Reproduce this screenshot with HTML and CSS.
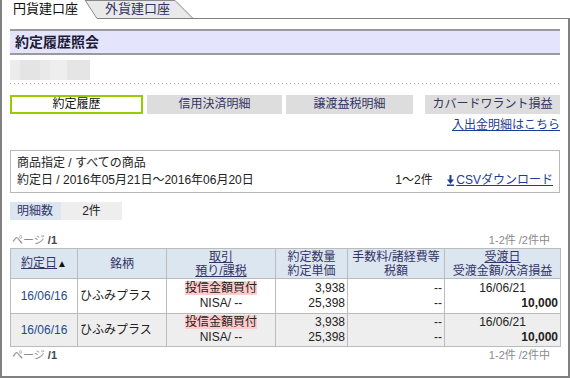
FILE: index.html
```html
<!DOCTYPE html>
<html lang="ja">

<head>
    <meta charset="UTF-8">
    <title>約定履歴照会</title>
    <link rel="stylesheet" href="styles.css">
</head>

<body>
    <div class="page">

        <div class="tabs">
            <svg class="tab-shapes" width="570" height="19" viewBox="0 0 570 19">
                <polygon points="85,0 175,0 193,18 97,18" fill="#e9e9e9" />
                <line x1="85" y1="0.5" x2="175" y2="0.5" stroke="#888" />
                <line x1="175" y1="0.5" x2="193" y2="18.5" stroke="#888" />
                <polygon points="0,0 85,0 97,18 0,18" fill="#fff" />
                <line x1="85" y1="0" x2="97" y2="18.5" stroke="#888" />
                <line x1="1" y1="0" x2="1" y2="19" stroke="#808080" stroke-width="2" />
                <line x1="97" y1="18.5" x2="570" y2="18.5" stroke="#808080" />
                <line x1="569" y1="18" x2="569" y2="19" stroke="#808080" stroke-width="2" />
            </svg>
            <span class="tab tab-on">円貨建口座</span>
            <span class="tab tab-off">外貨建口座</span>
        </div>

        <div class="frame">
            <h1 class="title">約定履歴照会</h1>
            <div class="masked"></div>
            <div class="dots"></div>

            <div class="menu">
                <span class="menu-btn active w1">約定履歴</span>
                <span class="menu-btn w2">信用決済明細</span>
                <span class="menu-btn w3">譲渡益税明細</span>
                <span class="menu-btn w4">カバードワラント損益</span>
            </div>

            <div class="link-row"><a href="#">入出金明細はこちら</a></div>

            <div class="cond">
                <div>商品指定 / すべての商品</div>
                <div class="cond-line">
                    <span class="cond-date">約定日 / 2016年05月21日～2016年06月20日</span>
                    <span class="cond-num">1～2件</span>
                    <a href="#" class="csv">
                        <svg class="dl-icon" width="7" height="11" viewBox="0 0 7 11">
                            <rect x="2.5" y="0" width="2" height="5" fill="#1d3c96" />
                            <polygon points="0,4.5 7,4.5 3.5,9" fill="#1d3c96" />
                            <rect x="0" y="9.5" width="7" height="1.5" fill="#1d3c96" />
                        </svg><span class="csv-text">CSVダウンロード</span>
                    </a>
                </div>
            </div>

            <div class="count">
                <span class="count-label">明細数</span>
                <span class="count-val">2件</span>
            </div>

            <div class="pager">
                <span>ページ <b>/1</b></span>
                <span>1-2件 /2件中</span>
            </div>

            <table class="trades">
                <colgroup>
                    <col style="width:67px">
                    <col style="width:89px">
                    <col style="width:109px">
                    <col style="width:72px">
                    <col style="width:97px">
                    <col style="width:116px">
                </colgroup>
                <tr>
                    <th><a href="#">約定日</a><span class="sort">▲</span></th>
                    <th>銘柄</th>
                    <th><a href="#">取引</a><br><a href="#">預り/課税</a></th>
                    <th>約定数量<br>約定単価</th>
                    <th>手数料/諸経費等<br>税額</th>
                    <th><a href="#">受渡日</a><br>受渡金額/決済損益</th>
                </tr>
                <tr class="r1">
                    <td class="date">16/06/16</td>
                    <td class="name">ひふみプラス</td>
                    <td class="kind"><span class="tag">投信金額買付</span><br>NISA/ --</td>
                    <td class="num">3,938<br>25,398</td>
                    <td class="num">--<br>--</td>
                    <td class="settle"><div class="center">16/06/21</div><div class="amt">10,000</div></td>
                </tr>
                <tr class="r2">
                    <td class="date">16/06/16</td>
                    <td class="name">ひふみプラス</td>
                    <td class="kind"><span class="tag">投信金額買付</span><br>NISA/ --</td>
                    <td class="num">3,938<br>25,398</td>
                    <td class="num">--<br>--</td>
                    <td class="settle"><div class="center">16/06/21</div><div class="amt">10,000</div></td>
                </tr>
            </table>

            <div class="pager bottom">
                <span>ページ <b>/1</b></span>
                <span>1-2件 /2件中</span>
            </div>
        </div>

    </div>
</body>

</html>
```

FILE: styles.css
```css
body {
    margin: 0;
    background: #fff;
    font-family: "Liberation Sans", "Noto Sans CJK JP", sans-serif;
    font-size: 12px;
    color: #222;
}

.page {
    width: 570px;
    height: 378px;
}

/* tabs */

.tabs {
    position: relative;
    height: 19px;
    display: flex;
}

.tab-shapes {
    position: absolute;
    left: 0;
    top: 0;
}

.tab {
    position: relative;
    font-size: 13px;
    line-height: 18px;
}

.tab-on {
    width: 92px;
    box-sizing: border-box;
    padding-left: 13px;
    color: #111;
}

.tab-off {
    padding-left: 13px;
    color: #333366;
}

/* frame */

.frame {
    height: 359px;
    box-sizing: border-box;
    border: 2px solid #808080;
    border-top: none;
    padding: 10px 8px 0 8px;
}

.title {
    margin: 0;
    height: 22px;
    line-height: 22px;
    padding-left: 5px;
    font-size: 14px;
    font-weight: bold;
    color: #1c1c36;
    background: #e4e4fd;
    border-top: 2px solid #9a9a9a;
    border-bottom: 2px solid #9a9a9a;
}

.masked {
    margin-top: 5px;
    width: 80px;
    height: 20px;
    background: linear-gradient(to right, #ececec 0 10px, #e4e4e4 10px 30px, #e9e9e9 30px 40px, #eeeeee 40px 57px, #e5e5e5 57px 80px);
}

.dots {
    margin-top: 3px;
    height: 1px;
    background: repeating-linear-gradient(to right, #aaa 0 1px, transparent 1px 4px);
}

/* menu buttons */

.menu {
    display: flex;
    margin-top: 11px;
}

.menu-btn {
    height: 19px;
    line-height: 19px;
    box-sizing: border-box;
    text-align: center;
    background: #dddddd;
    color: #333366;
}

.menu-btn.active {
    background: #fff;
    border: 2px solid #99cc00;
    line-height: 15px;
    color: #111;
}

.w1 { width: 133px; }
.w2 { width: 135px; margin-left: 4px; }
.w3 { width: 127px; margin-left: 4px; }
.w4 { width: 135px; margin-left: 12px; }

.link-row {
    margin-top: 3px;
    height: 16px;
    line-height: 16px;
    text-align: right;
}

a {
    color: #1d3c96;
}

/* search condition */

.cond {
    margin-top: 17px;
    border: 1px solid #b8b8b8;
    padding: 4px 6px 3px 6px;
    line-height: 17px;
}

.cond-line {
    display: flex;
    align-items: center;
}

.cond-date {
    flex: 1;
}

.cond-num {
    width: 52px;
}

.csv {
    display: flex;
    align-items: center;
}

.dl-icon {
    margin-right: 2px;
}

.count {
    display: flex;
    margin-top: 9px;
    height: 18px;
    line-height: 18px;
}

.count-label {
    width: 51px;
    box-sizing: border-box;
    padding-left: 7px;
    background: #dce6f1;
    color: #333366;
}

.count-val {
    width: 61px;
    text-align: center;
    background: #eeeeee;
}

.pager {
    display: flex;
    justify-content: space-between;
    margin-top: 12px;
    height: 16px;
    line-height: 16px;
    padding: 0 10px 0 2px;
    font-size: 11px;
    color: #8a8a8a;
}

.pager b {
    color: #445;
}

.pager.bottom {
    margin-top: 1px;
    line-height: 14px;
}

/* table */

.trades {
    width: 550px;
    table-layout: fixed;
    border-collapse: collapse;
    line-height: 15px;
}

.trades th,
.trades td {
    border: 1px solid #bbbbbb;
    padding: 0 2px;
}

.trades th {
    height: 29px;
    background: #dce6f1;
    font-weight: normal;
    color: #333366;
    line-height: 14px;
}

.trades th a {
    color: #333366;
}

.sort {
    font-size: 10px;
    color: #111;
}

.r1 td {
    height: 34px;
}

.r2 td {
    height: 32px;
    background: #eeeeee;
}

.date {
    text-align: center;
    color: #1f4b8c;
}

.kind {
    text-align: center;
}

.tag {
    background: #ffcccc;
    line-height: 13px;
}

.num {
    text-align: right;
}

.center {
    text-align: center;
}

.amt {
    text-align: right;
    font-weight: bold;
}
```
